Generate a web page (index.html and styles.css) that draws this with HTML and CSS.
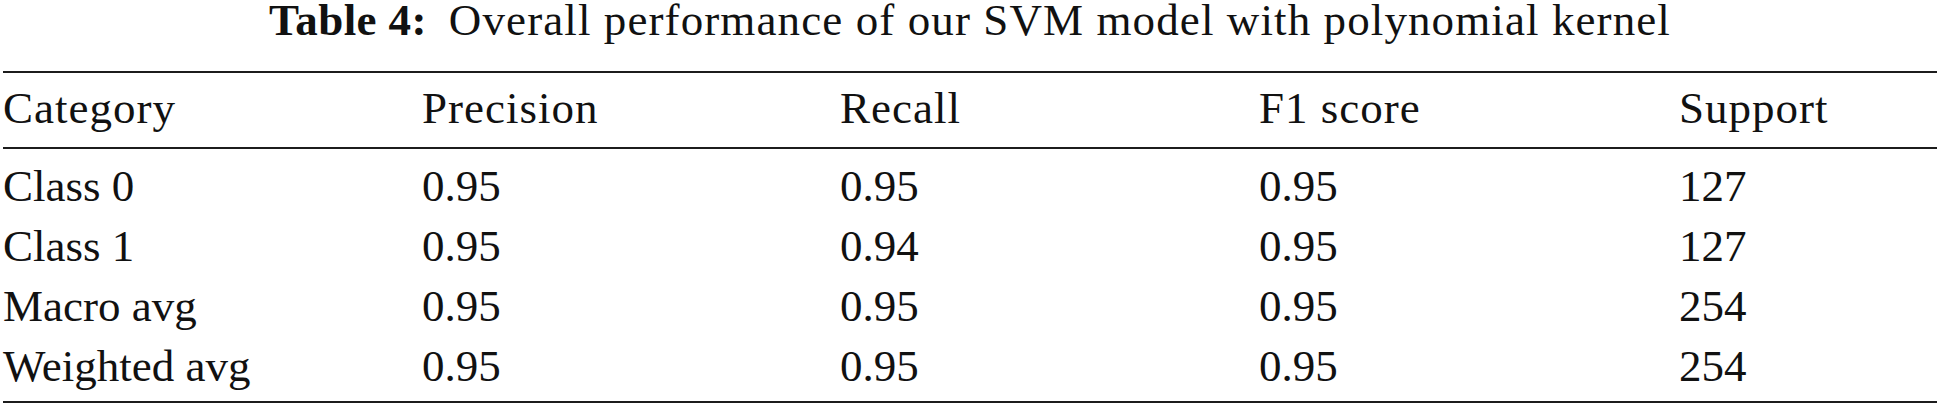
FILE: index.html
```html
<!DOCTYPE html>
<html>

<head>
    <title>Table 4</title>
    <link rel="stylesheet" href="styles.css">
</head>

<body>

    <div class="caption">
        <span class="label">Table 4:</span>Overall performance of our SVM model with polynomial kernel
    </div>

    <table class="results">
        <colgroup>
            <col class="c1">
            <col class="c2">
            <col class="c3">
            <col class="c4">
            <col>
        </colgroup>
        <thead>
            <tr>
                <th>Category</th>
                <th>Precision</th>
                <th>Recall</th>
                <th>F1 score</th>
                <th>Support</th>
            </tr>
        </thead>
        <tbody>
            <tr class="first">
                <td>Class 0</td>
                <td>0.95</td>
                <td>0.95</td>
                <td>0.95</td>
                <td>127</td>
            </tr>
            <tr>
                <td>Class 1</td>
                <td>0.95</td>
                <td>0.94</td>
                <td>0.95</td>
                <td>127</td>
            </tr>
            <tr>
                <td>Macro avg</td>
                <td>0.95</td>
                <td>0.95</td>
                <td>0.95</td>
                <td>254</td>
            </tr>
            <tr class="last">
                <td>Weighted avg</td>
                <td>0.95</td>
                <td>0.95</td>
                <td>0.95</td>
                <td>254</td>
            </tr>
        </tbody>
    </table>

</body>

</html>
```

FILE: styles.css
```css
* {
    margin: 0;
    padding: 0;
    box-sizing: border-box;
    font-family: 'Liberation Serif', 'Times New Roman', serif;
}

body {
    background: #ffffff;
    color: #111111;
}

.caption {
    font-size: 45px;
    line-height: 40px;
    text-align: center;
    margin-bottom: 31px;
    white-space: nowrap;
    letter-spacing: 1.1px;
}

.caption .label {
    font-weight: bold;
    letter-spacing: 0.4px;
    margin-right: 22px;
}

.results {
    margin-left: 3px;
    width: 1934px;
    table-layout: fixed;
    border-collapse: separate;
    border-spacing: 0;
    border-top: 2px solid #1c1c1c;
    border-bottom: 2px solid #1c1c1c;
    font-size: 45px;
}

.results .c1 {
    width: 419px;
}

.results .c2 {
    width: 418px;
}

.results .c3 {
    width: 419px;
}

.results .c4 {
    width: 420px;
}

.results th,
.results td {
    text-align: left;
    font-weight: normal;
    line-height: 60px;
    white-space: nowrap;
}

.results th {
    padding: 5px 0 9px 0;
    border-bottom: 2px solid #1c1c1c;
    letter-spacing: 1px;
}

.results tr.first td {
    padding-top: 7px;
}

.results tr.last td {
    padding-bottom: 5px;
}
```
